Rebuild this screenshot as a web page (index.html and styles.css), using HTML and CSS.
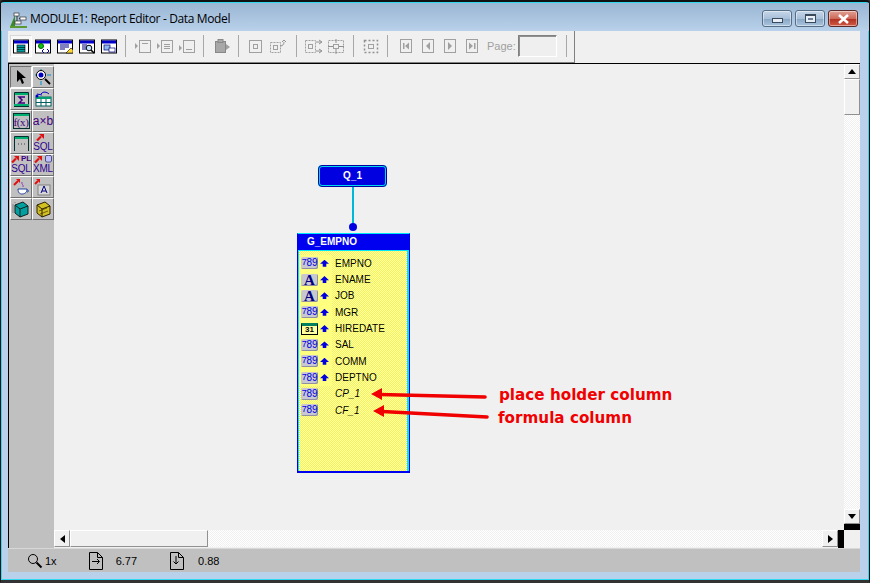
FILE: index.html
```html
<!DOCTYPE html>
<html lang="en">
<head>
<meta charset="utf-8">
<title>MODULE1: Report Editor - Data Model</title>
<link rel="stylesheet" href="styles.css">
</head>
<body>
<svg class="defs" width="0" height="0" aria-hidden="true">
  <symbol id="win" viewBox="0 0 16 14">
    <rect x=".5" y=".5" width="15" height="13" fill="#fff" stroke="#000"/>
    <rect x="1" y="1" width="14" height="3" fill="#0000c8"/>
  </symbol>
  <symbol id="redarrow" viewBox="0 0 9 8">
    <path d="M1 7.500L5 3.500" stroke="#e01010" stroke-width="2.200"/>
    <path d="M3 1h5v5z" fill="#e01010"/>
  </symbol>
  <symbol id="panel" viewBox="0 0 17 16">
    <path d="M1.500 16V1.500h14V16" fill="none" stroke="#003030"/>
    <rect x="2" y="2" width="13" height="2" fill="#00b070"/>
  </symbol>
</svg>
<div class="window">
  <header class="titlebar">
    <svg class="appicon" width="20" height="20" viewBox="0 0 20 20">
      <path d="M1 18l5-12v12z" fill="#3c8a2c"/>
      <rect x="1" y="17" width="17" height="2" fill="#5a9a30"/>
      <rect x="5" y="4" width="5" height="3" fill="#fff" stroke="#333" stroke-width=".7"/>
      <rect x="11" y="8" width="6" height="3" fill="#fff" stroke="#333" stroke-width=".7"/>
      <rect x="6" y="12" width="6" height="3" fill="#fff" stroke="#333" stroke-width=".7"/>
      <path d="M8 7v5M10 9.500h1" stroke="#333" fill="none"/>
    </svg>
    <span class="title">MODULE1: Report Editor - Data Model</span>
    <div class="caption">
      <span class="capbtn"><span class="g-min"></span></span>
      <span class="capbtn"><span class="g-max"></span></span>
      <span class="capbtn close">
        <svg width="13" height="10" viewBox="0 0 13 10"><path d="M2 1l9 8M11 1l-9 8" stroke="#fff" stroke-width="2.600"/></svg>
      </span>
    </div>
  </header>
  <div class="client">
    <div class="toolbar">
      <div class="tgroup g-main">
        <span class="tool active"><svg width="16" height="15" viewBox="0 0 16 15"><use href="#win"/><rect x="4" y="6" width="8" height="7" fill="#00a0a0" stroke="#000" stroke-width=".6"/><path d="M4 8.500h8M4 10.500h8" stroke="#000" stroke-width=".6"/></svg></span>
        <span class="tool"><svg width="16" height="15" viewBox="0 0 16 15"><use href="#win"/><circle cx="6" cy="7" r="2.500" fill="#10c010" stroke="#060"/><path d="M9 10l-2 2 2 2M12 10l2 2-2 2" stroke="#0000a0" fill="none"/></svg></span>
        <span class="tool"><svg width="16" height="15" viewBox="0 0 16 15"><use href="#win"/><path d="M3 6h9M3 8h9M3 10h5" stroke="#000080"/><path d="M9 14l5-5 2 2v3z" fill="#ffd830" stroke="#000" stroke-width=".6"/></svg></span>
        <span class="tool"><svg width="16" height="15" viewBox="0 0 16 15"><use href="#win"/><path d="M3 6h5M3 8h4M3 10h4" stroke="#000080"/><circle cx="10" cy="9" r="2.800" fill="#bfe0ff" stroke="#000"/><path d="M12 11l3 3" stroke="#000" stroke-width="1.600"/></svg></span>
        <span class="tool"><svg width="16" height="15" viewBox="0 0 16 15"><use href="#win"/><rect x="3" y="6" width="6" height="5" fill="#8fb8e8" stroke="#000080" stroke-width=".7"/><rect x="8" y="9" width="6" height="4" fill="#fff" stroke="#000080" stroke-width=".7"/></svg></span>
      </div>
      <span class="sep s1"></span>
      <div class="tgroup g-dis3">
        <span class="dis"><svg width="16" height="15" viewBox="0 0 16 15"><path d="M0 4l3 3-3 3z" fill="#a0a0a0"/><rect x="4.500" y="1.500" width="11" height="12" fill="none" stroke="#a0a0a0"/><path d="M7 4.500h6" stroke="#a0a0a0"/></svg></span>
        <span class="dis"><svg width="16" height="15" viewBox="0 0 16 15"><path d="M0 4l3 3-3 3z" fill="#a0a0a0"/><rect x="4.500" y="1.500" width="11" height="12" fill="none" stroke="#a0a0a0"/><path d="M7 5.500h6M7 7.500h6M7 9.500h6" stroke="#a0a0a0"/></svg></span>
        <span class="dis"><svg width="16" height="15" viewBox="0 0 16 15"><path d="M0 6l3 3-3 3z" fill="#a0a0a0"/><rect x="4.500" y="1.500" width="11" height="12" fill="none" stroke="#a0a0a0"/><path d="M7 10.500h6" stroke="#a0a0a0"/></svg></span>
      </div>
      <span class="sep s2"></span>
      <span class="dis"><svg width="16" height="15" viewBox="0 0 16 15"><rect x=".5" y="2.500" width="10" height="11" fill="#a8a8a8" stroke="#888"/><rect x="3" y=".5" width="5" height="3" fill="#a8a8a8" stroke="#888"/><path d="M11 5l4 3-4 3z" fill="#a0a0a0"/></svg></span>
      <span class="sep s3"></span>
      <div class="tgroup g-dis2">
        <span class="dis"><svg width="14" height="15" viewBox="0 0 14 15"><rect x=".5" y="1.500" width="12" height="12" fill="none" stroke="#a0a0a0"/><rect x="4.500" y="5.500" width="4" height="4" fill="none" stroke="#a0a0a0"/></svg></span>
        <span class="dis"><svg width="18" height="15" viewBox="0 0 18 15"><rect x=".5" y="3.500" width="10" height="10" fill="none" stroke="#a0a0a0" stroke-dasharray="2 1"/><rect x="3.500" y="6.500" width="4" height="4" fill="none" stroke="#a0a0a0"/><path d="M10 7c3 0 4-2 4-4M12 3l2-2 2 2" stroke="#909090" fill="none"/></svg></span>
      </div>
      <span class="sep s4"></span>
      <div class="tgroup g-dis2b">
        <span class="dis"><svg width="18" height="15" viewBox="0 0 18 15"><rect x=".5" y="1.500" width="10" height="12" fill="none" stroke="#a0a0a0" stroke-dasharray="2 1"/><rect x="3.500" y="5.500" width="4" height="4" fill="none" stroke="#a0a0a0"/><path d="M11 3h5M11 12h5M14 1l3 2-3 2M14 10l3 2-3 2" stroke="#909090" fill="none"/></svg></span>
        <span class="dis"><svg width="16" height="15" viewBox="0 0 16 15"><rect x=".5" y="1.500" width="15" height="12" fill="none" stroke="#a0a0a0" stroke-dasharray="2 1"/><rect x="5.500" y="5.500" width="5" height="4" fill="none" stroke="#a0a0a0"/><path d="M8 0v4M8 10v5M0 7.500h5M11 7.500h5" stroke="#909090"/></svg></span>
      </div>
      <span class="sep s5"></span>
      <span class="dis"><svg width="16" height="15" viewBox="0 0 16 15"><rect x="1.500" y="1.500" width="13" height="12" fill="none" stroke="#909090" stroke-dasharray="2 2" stroke-width="1.500"/><rect x="5.500" y="5.500" width="5" height="4" fill="none" stroke="#a0a0a0"/></svg></span>
      <span class="sep s6"></span>
      <div class="tgroup g-nav">
        <span class="nav"><svg width="12" height="14" viewBox="0 0 12 14"><rect x=".5" y=".5" width="11" height="13" fill="none" stroke="#a0a0a0"/><path d="M3 4h1.500v6H3zM9 3.500v7L5 7z" fill="#a0a0a0"/></svg></span>
        <span class="nav"><svg width="12" height="14" viewBox="0 0 12 14"><rect x=".5" y=".5" width="11" height="13" fill="none" stroke="#a0a0a0"/><path d="M8 3v8L4 7z" fill="#a0a0a0"/></svg></span>
        <span class="nav"><svg width="12" height="14" viewBox="0 0 12 14"><rect x=".5" y=".5" width="11" height="13" fill="none" stroke="#a0a0a0"/><path d="M4 3v8l4-4z" fill="#a0a0a0"/></svg></span>
        <span class="nav"><svg width="12" height="14" viewBox="0 0 12 14"><rect x=".5" y=".5" width="11" height="13" fill="none" stroke="#a0a0a0"/><path d="M8 4h1.500v6H8zM3 3.500v7L7 7z" fill="#a0a0a0"/></svg></span>
      </div>
      <span class="pagelabel">Page:</span>
      <span class="pagebox"></span>
      <span class="sep s7"></span>
    </div>
    <div class="main">
      <aside class="palette">
        <span class="pbtn pressed"><svg width="14" height="16" viewBox="0 0 14 16"><path d="M3 1v12l3-3 2 5 2-1-2-5h4z" fill="#000"/></svg></span>
        <span class="pbtn"><svg width="18" height="18" viewBox="0 0 18 18"><path d="M1 7h2M7 1v2M13 7h4M7 13v4" stroke="#0090d0"/><circle cx="7" cy="7" r="4.500" fill="#fff" stroke="#000"/><circle cx="7" cy="7" r="2.500" fill="#0000c0"/><path d="M11 11l5 5" stroke="#000" stroke-width="2"/></svg></span>
        <span class="pbtn"><svg width="17" height="16" viewBox="0 0 17 16"><use href="#panel"/><rect x="1" y="13" width="15" height="2" fill="#00b070"/><path d="M1 15.500h15" stroke="#003030"/><path d="M12 6H6l3 3-3 3h6" fill="none" stroke="#400080" stroke-width="1.500"/></svg></span>
        <span class="pbtn"><svg width="18" height="16" viewBox="0 0 18 16"><path d="M7 3c2-3 6-2 8 0M3 3l5 1" stroke="#0000c0" fill="none"/><rect x="2" y="6" width="15" height="9" fill="#fff" stroke="#006060"/><rect x="2" y="6" width="15" height="2" fill="#00a070"/><path d="M7 8v7M12 8v7M2 11.500h15" stroke="#006060"/><circle cx="3" cy="5" r="1.500" fill="#0000c0"/></svg></span>
        <span class="pbtn panelbtn"><span class="fx">f(x)</span></span>
        <span class="pbtn ptext">a×b</span>
        <span class="pbtn"><svg width="17" height="16" viewBox="0 0 17 16"><use href="#panel"/><path d="M5 9h1M8 9h1M11 9h1" stroke="#404040"/></svg></span>
        <span class="pbtn stack"><svg class="red" width="9" height="8"><use href="#redarrow"/></svg><span class="ptxt">SQL</span></span>
        <span class="pbtn stack"><span class="ptop"><svg width="9" height="8"><use href="#redarrow"/></svg><span class="ptiny">PL</span></span><span class="ptxt">SQL</span></span>
        <span class="pbtn stack"><span class="ptop"><svg width="9" height="8"><use href="#redarrow"/></svg><svg width="9" height="8" viewBox="0 0 8 8"><ellipse cx="4" cy="1.500" rx="3" ry="1.200" fill="#c0c0ff" stroke="#000040" stroke-width=".6"/><path d="M1 2v4c0 1.500 6 1.500 6 0V2" fill="#c0c0ff" stroke="#000040" stroke-width=".6"/></svg></span><span class="ptxt">XML</span></span>
        <span class="pbtn"><svg width="18" height="18" viewBox="0 0 18 18"><path d="M2 7L6 3" stroke="#e01010" stroke-width="2"/><path d="M4 1h4v4z" fill="#e01010"/><path d="M6 11h9c0 4-3 5-5 5s-4-1-4-5z" fill="#fff" stroke="#2040a0"/><path d="M15 12c2 0 2 2 0 2" stroke="#2040a0" fill="none"/><path d="M10 4c-1 2 2 3 1 5" stroke="#9030c0" fill="none"/></svg></span>
        <span class="pbtn"><svg width="18" height="18" viewBox="0 0 18 18"><path d="M1 6L4 3" stroke="#e01010" stroke-width="2"/><path d="M2 1h4v4z" fill="#e01010"/><rect x="4" y="7" width="12" height="10" fill="#d8d8d8" stroke="#808080"/><path d="M7 15l3-7 3 7M8 13h4" stroke="#000080" fill="none"/></svg></span>
        <span class="pbtn"><svg width="18" height="18" viewBox="0 0 18 18"><path d="M3 5l8-3 5 4v8l-8 3-5-4z" fill="#00a0a0" stroke="#102020"/><path d="M3 5l5 4 8-3M8 9v8" stroke="#102020" fill="none"/><path d="M1 4v9M3 2v1" stroke="#808080"/></svg></span>
        <span class="pbtn"><svg width="18" height="18" viewBox="0 0 18 18"><path d="M3 5l8-3 5 4v8l-8 3-5-4z" fill="#d0c020" stroke="#302000"/><path d="M3 5l5 4 8-3M8 9v8" stroke="#302000" fill="none"/><path d="M5 11l8-3M6 14l8-3" stroke="#302000" stroke-width=".6"/></svg></span>
      </aside>
      <div class="workarea">
        <div class="viewrow">
          <div class="canvas">
            <div class="query">Q_1</div>
            <div class="link"></div>
            <div class="joint"></div>
            <div class="group">
              <svg class="dither" width="108" height="237" aria-hidden="true">
                <defs>
                  <pattern id="yd" width="2" height="2" patternUnits="userSpaceOnUse">
                    <rect width="2" height="2" fill="#ffff00"/>
                    <rect x="1" width="1" height="1" fill="#ffffff"/>
                    <rect y="1" width="1" height="1" fill="#ffffff"/>
                  </pattern>
                </defs>
                <rect width="108" height="237" fill="url(#yd)"/>
                <rect y="21" width="33" height="131" fill="#ffff80"/>
              </svg>
              <div class="grouphead">G_EMPNO</div>
              <ul class="cols">
                <li class="col"><span class="badge num"><i>7</i>89</span><span class="up"></span><span class="name">EMPNO</span></li>
                <li class="col"><span class="badge alpha">A</span><span class="up"></span><span class="name">ENAME</span></li>
                <li class="col"><span class="badge alpha">A</span><span class="up"></span><span class="name">JOB</span></li>
                <li class="col"><span class="badge num"><i>7</i>89</span><span class="up"></span><span class="name">MGR</span></li>
                <li class="col"><span class="badge cal">31</span><span class="up"></span><span class="name">HIREDATE</span></li>
                <li class="col"><span class="badge num"><i>7</i>89</span><span class="up"></span><span class="name">SAL</span></li>
                <li class="col"><span class="badge num"><i>7</i>89</span><span class="up"></span><span class="name">COMM</span></li>
                <li class="col"><span class="badge num"><i>7</i>89</span><span class="up"></span><span class="name">DEPTNO</span></li>
                <li class="col"><span class="badge num"><i>7</i>89</span><span class="noup"></span><span class="name it">CP_1</span></li>
                <li class="col"><span class="badge num"><i>7</i>89</span><span class="noup"></span><span class="name it">CF_1</span></li>
              </ul>
            </div>
            <svg class="arrows" width="130" height="36" viewBox="0 0 130 36">
              <path d="M20 8.500L125 11" stroke="#f00000" stroke-width="3.600" stroke-linecap="round" fill="none"/>
              <path d="M11 8l11-6v12z" fill="#f00000"/>
              <path d="M22 25.500L127 31" stroke="#f00000" stroke-width="3.600" stroke-linecap="round" fill="none"/>
              <path d="M13 25l11-6v12z" fill="#f00000"/>
            </svg>
            <span class="note n1">place holder column</span>
            <span class="note n2">formula column</span>
          </div>
          <div class="vscroll">
            <span class="sbtn"><span class="tri-up"></span></span>
            <span class="vthumb"></span>
            <span class="vtrack"></span>
            <span class="sbtn"><span class="tri-down"></span></span>
            <span class="vblack"></span>
          </div>
        </div>
        <div class="hscrollrow">
          <div class="hscroll">
            <span class="sbtn"><span class="tri-left"></span></span>
            <span class="hthumb"></span>
            <span class="htrack"></span>
            <span class="sbtn"><span class="tri-right"></span></span>
            <span class="hblack"></span>
          </div>
          <span class="corner"></span>
        </div>
      </div>
    </div>
    <footer class="status">
      <span class="st st-zoom">
        <svg width="18" height="16" viewBox="0 0 18 16"><circle cx="6" cy="6" r="4.500" fill="none" stroke="#000"/><path d="M9.500 9.500l5 5" stroke="#000" stroke-width="2"/></svg>
        <span>1x</span>
      </span>
      <span class="st st-x">
        <svg width="14" height="18" viewBox="0 0 14 18"><path d="M.5.500h8l5 5v12H.5zM8.500.500v5h5M3 9.500h7M8 7l2.500 2.500L8 12" fill="none" stroke="#000"/></svg>
        <span>6.77</span>
      </span>
      <span class="st st-y">
        <svg width="14" height="18" viewBox="0 0 14 18"><path d="M.5.500h8l5 5v12H.5zM8.500.500v5h5M6 4v8M3.500 9.500L6 12l2.500-2.500" fill="none" stroke="#000"/></svg>
        <span>0.88</span>
      </span>
    </footer>
  </div>
</div>
</body>
</html>
```

FILE: styles.css
```css
* { box-sizing: border-box; }
html, body { margin: 0; padding: 0; }
body {
  width: 870px;
  height: 583px;
  overflow: hidden;
  background: #333;
  font-family: "Liberation Sans", Arial, sans-serif;
}
.defs { position: absolute; }
.window {
  width: 870px;
  height: 583px;
  display: flex;
  flex-direction: column;
  background: #b9d1ea;
  border-top: 2px solid #111;
  border-left: 1px solid #111;
  border-right: 1px solid #111;
  border-bottom: 3px solid #333;
  box-shadow: inset 0 0 0 1px #30d8f0;
  padding: 1px 9px 8px 7px;
  border-radius: 4px 4px 0 0;
  position: relative;
}
.titlebar {
  margin: 0 -9px 0 -7px;
  padding: 3px 11px 0 8px;
  height: 28px;
  flex: none;
  display: flex;
  align-items: center;
  background: linear-gradient(#9ab6d4, #b9d1ea);
}
.appicon { flex: none; }
.title {
  margin-left: 1px;
  font-size: 12px;
  color: #000;
  font-family: "Open Sans", sans-serif;
  letter-spacing: -.03em;
}
.caption {
  margin-left: auto;
  display: flex;
  gap: 3px;
}
.capbtn {
  width: 30px;
  height: 17px;
  border: 1px solid #566d86;
  border-radius: 3px;
  background: linear-gradient(#c5d6e8 0, #a9c0d9 50%, #88a6c4 52%, #a9c4de 100%);
  box-shadow: inset 0 0 0 1px rgba(255,255,255,.45);
  display: flex;
  align-items: center;
  justify-content: center;
}
.capbtn.close {
  border-color: #5c2a2a;
  background: linear-gradient(#e0a194 0, #cf6a5a 50%, #b03020 52%, #d05a45 100%);
}
.g-min { width: 11px; height: 5px; margin-top: 3px; background: #e8eef5; border: 1px solid #3a4a5a; }
.g-max { width: 11px; height: 9px; border: 1px solid #3a4a5a; border-top-width: 2px; box-shadow: inset 0 0 0 2px #e8eef5; background: #6a8098; }
.client {
  flex: 1;
  min-height: 0;
  display: flex;
  flex-direction: column;
  background: #f0f0f0;
}
.toolbar {
  flex: none;
  width: 567px;
  height: 32px;
  display: flex;
  align-items: center;
  padding: 0 0 1px 2px;
  border-right: 1px solid #808080;
  border-bottom: 1px solid #808080;
}
.tgroup { display: flex; align-items: center; }
.tool { width: 22px; height: 22px; display: flex; align-items: center; justify-content: center; }
.tool.active { background: #f8f8f8; border: 1px solid #d8d8d8; border-right-color: #fff; border-bottom-color: #fff; }
.dis { display: flex; align-items: center; }
.nav { display: flex; }
.sep { width: 1px; height: 22px; background: #a8a8a8; flex: none; }
.s1 { margin: 0 9px 0 5px; }
.s2 { margin: 0 11px 0 8px; }
.s3 { margin: 0 10px 0 7px; }
.s4 { margin: 0 8px; }
.s5 { margin: 0 9px 0 9px; }
.s6 { margin: 0 12px 0 8px; }
.s7 { margin-left: 9px; }
.g-dis3 { gap: 6px; }
.g-dis2 { gap: 7px; }
.g-dis2b { gap: 5px; }
.g-nav { gap: 10px; }
.pagelabel { margin-left: 9px; font-size: 11px; color: #a0a0a0; }
.pagebox { margin-left: 2px; width: 39px; height: 22px; border: 1px solid #fff; border-top: 1px solid #808080; border-left: 1px solid #808080; background: #efefef; box-shadow: inset 1px 1px 0 #909090; }
.main {
  flex: 1;
  min-height: 0;
  display: flex;
  border-top: 1px solid #000;
  border-left: 1px solid #000;
}
.palette {
  flex: none;
  width: 45px;
  background: #c0c0c0;
  padding: 2px 0 0 1px;
  display: grid;
  grid-template-columns: 22px 22px;
  grid-auto-rows: 22px;
  align-content: start;
}
.pbtn {
  display: flex;
  align-items: center;
  justify-content: center;
  background: #c0c0c0;
  border: 1px solid;
  border-color: #fff #707070 #707070 #fff;
  overflow: hidden;
}
.pbtn.pressed { border-color: #707070 #fff #fff #707070; background: #b8b8b8; }
.ptext { font-size: 12px; color: #400080; }
.panelbtn { position: relative; }
.fx {
  width: 17px;
  height: 16px;
  text-align: center;
  font: 11px/17px "Liberation Serif", serif;
  color: #400080;
  border: 1px solid #003030;
  box-shadow: inset 0 2px 0 #00b070;
  letter-spacing: -.4px;
}
.stack { flex-direction: column; gap: 0; justify-content: flex-start; }
.red { align-self: flex-start; margin-left: 3px; }
.ptop { display: flex; align-items: flex-start; justify-content: center; height: 8px; gap: 1px; }
.ptiny { font-size: 8px; line-height: 8px; color: #400080; font-weight: bold; }
.ptxt { font-size: 10px; line-height: 11px; color: #300090; letter-spacing: -.2px; }
.workarea { flex: 1; min-width: 0; display: flex; flex-direction: column; }
.viewrow { flex: 1; min-height: 0; display: flex; }
.canvas { flex: 1; position: relative; background: #f0f0f0; overflow: hidden; }
.query {
  position: absolute;
  left: 264px; top: 101px;
  width: 69px; height: 22px;
  background: #0000e0;
  border: 2px solid #00d8f0;
  outline: 1px solid #0000a0;
  outline-offset: -1px;
  border-radius: 4px;
  color: #fff;
  font: bold 10px/18px "Liberation Sans", sans-serif;
  text-align: center;
}
.link { position: absolute; left: 298px; top: 123px; width: 2px; height: 38px; background: #00b8d8; }
.joint { position: absolute; left: 295px; top: 159px; width: 8px; height: 8px; border-radius: 50%; background: #0000e0; }
.group {
  position: absolute;
  left: 243px; top: 169px;
  width: 113px; height: 240px;
  border: 1px solid #0000f0;
  border-top-color: #00e8f8;
  border-bottom-width: 2px;
  box-shadow: inset 1px 0 0 #00e8f8, inset -2px 0 0 #00e8f8;
  padding: 0 1px 1px;
}
.dither { position: absolute; left: 1px; top: 0; display: block; }
.grouphead {
  position: relative;
  height: 17px;
  margin: 0 -1px;
  background: #0000f0;
  border-bottom: 1px solid #00e8f8;
  color: #fff;
  font: bold 10px/16px "Liberation Sans", sans-serif;
  padding-left: 9px;
}
.cols { position: relative; list-style: none; margin: 4px 0 0; padding: 0; }
.col { height: 16.350px; display: flex; align-items: center; padding-left: 2px; font-size: 10px; color: #000; }
.badge { width: 17px; height: 12px; flex: none; border-radius: 2px; text-align: center; }
.num { background: #c8c8d0; color: #0000e0; font: 10px/12px "Liberation Sans", sans-serif; letter-spacing: -.2px; box-shadow: inset -1px -1px 0 #9090a0; }
.num i { font-style: normal; font-size: 9px; position: relative; top: -1px; }
.alpha { background: #c8c8d0; color: #000080; font: bold 15px/12px "Liberation Serif", serif; box-shadow: inset -1px -1px 0 #9090a0; }
.cal { background: #ffffa0; color: #000; border: 1px solid #000; border-top: 3px solid #008060; border-radius: 0; font: bold 8px/8px "Liberation Sans", sans-serif; }
.up { width: 9px; height: 7px; margin-left: 2px; flex: none; background: #0000e0; clip-path: polygon(50% 0, 100% 60%, 70% 60%, 70% 100%, 30% 100%, 30% 60%, 0 60%); }
.noup { width: 9px; margin-left: 2px; flex: none; }
.name { margin-left: 6px; }
.it { font-style: italic; }
.arrows { position: absolute; left: 306px; top: 322px; }
.note { position: absolute; font: bold 15.200px/18px "DejaVu Sans", sans-serif; color: #f00000; white-space: nowrap; }
.n1 { left: 445px; top: 322px; }
.n2 { left: 444px; top: 345px; }
.vscroll { flex: none; width: 16px; display: flex; flex-direction: column; background: #f0f0f0; }
.sbtn {
  flex: none; width: 16px; height: 15px;
  display: flex; align-items: center; justify-content: center;
  background: #f0f0f0;
  border: 1px solid;
  border-color: #fff #909090 #909090 #fff;
}
.vthumb { flex: none; height: 36px; border: 1px solid; border-color: #fff #909090 #909090 #fff; background: #f0f0f0; }
.vtrack, .htrack {
  flex: 1;
  background-image: conic-gradient(#fff 25%, #f0f0f0 0 50%, #fff 0 75%, #f0f0f0 0);
  background-size: 2px 2px;
}
.vblack { flex: none; height: 6px; background: #000; }
.tri-up, .tri-down, .tri-left, .tri-right { width: 0; height: 0; border: 4px solid transparent; }
.tri-up { border-top: 0; border-bottom: 5px solid #000; }
.tri-down { border-bottom: 0; border-top: 5px solid #000; }
.tri-left { border-left: 0; border-right: 5px solid #000; }
.tri-right { border-right: 0; border-left: 5px solid #000; }
.hscrollrow { flex: none; height: 18px; display: flex; }
.hscroll { flex: 1; display: flex; align-items: stretch; padding-bottom: 1px; }
.hscroll .sbtn { height: auto; }
.hthumb { flex: none; width: 138px; border: 1px solid; border-color: #fff #909090 #909090 #fff; background: #f0f0f0; }
.hblack { flex: none; width: 6px; background: #000; margin-bottom: -1px; }
.corner { flex: none; width: 16px; background: #f0f0f0; }
.status {
  flex: none;
  height: 24px;
  background: #c0c0c0;
  display: flex;
  align-items: center;
  font-size: 11px;
  color: #000;
  border-top: 1px solid #d8d8d8;
}
.st { display: flex; align-items: center; }
.st-zoom { margin-left: 19px; gap: 0; }
.st-x { margin-left: 32px; gap: 13px; }
.st-y { margin-left: 33px; gap: 14px; }
```
